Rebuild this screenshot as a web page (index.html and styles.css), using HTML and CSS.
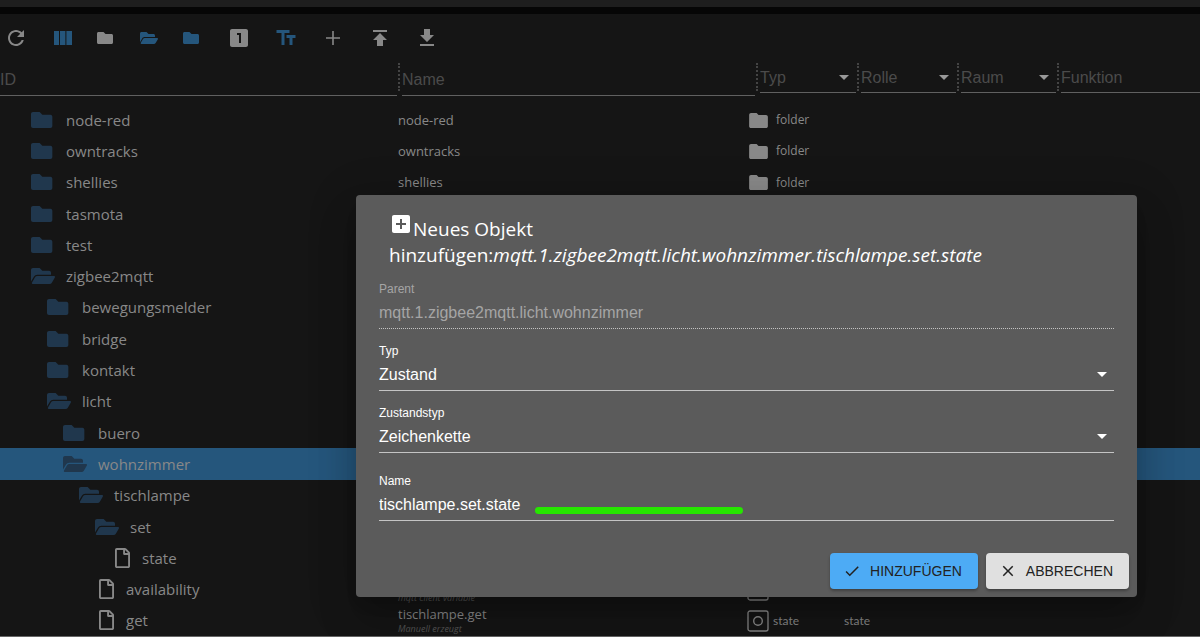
FILE: index.html
```
<!DOCTYPE html>
<html lang="de">
<head>
    <meta charset="UTF-8">
    <meta name="viewport" content="width=device-width, initial-scale=1.0">
    <title>Objekte</title>
    <link rel="stylesheet" href="styles.css">
</head>
<body>
    <svg class="sprite" aria-hidden="true">
        <symbol id="folder" viewBox="0 0 576 512"><path d="M464 128H272l-64-64H48C21.49 64 0 85.49 0 112v288c0 26.51 21.49 48 48 48h416c26.51 0 48-21.49 48-48V176c0-26.51-21.49-48-48-48z"/></symbol>
        <symbol id="folder-open" viewBox="0 0 576 512"><path d="M572.694 292.093L500.27 416.248A63.997 63.997 0 0 1 444.989 448H45.025c-18.523 0-30.064-20.093-20.731-36.093l72.424-124.155A64 64 0 0 1 152 256h399.964c18.523 0 30.064 20.093 20.73 36.093zM152 224h328v-48c0-26.51-21.49-48-48-48H272l-64-64H48C21.49 64 0 85.49 0 112v278.046l69.077-118.418C86.214 242.25 117.989 224 152 224z"/></symbol>
        <symbol id="file" viewBox="0 0 384 512"><path d="M369.9 97.9L286 14C277 5 264.8-.1 252.1-.1H48C21.5 0 0 21.5 0 48v416c0 26.5 21.5 48 48 48h288c26.5 0 48-21.5 48-48V131.9c0-12.7-5.1-25-14.1-34zM332.1 128H256V51.9l76.1 76.1zM48 464V48h160v104c0 13.3 10.7 24 24 24h104v288H48z"/></symbol>
        <symbol id="type-folder" viewBox="2 4 20 16"><path d="M10 4H4c-1.1 0-1.99.9-1.99 2L2 18c0 1.1.9 2 2 2h16c1.1 0 2-.9 2-2V8c0-1.1-.9-2-2-2h-8l-2-2z"/></symbol>
        <symbol id="type-state" viewBox="0 0 22 22"><rect x="1" y="1" width="20" height="20" rx="2" fill="none" stroke="currentColor" stroke-width="1.3"/><circle cx="11" cy="11" r="4.3" fill="none" stroke="currentColor" stroke-width="1.4"/></symbol>
    </svg>

    <div class="app-bar"></div>
    <main>
        <div class="toolbar">
            <button title="Aktualisieren"><svg viewBox="0 0 24 24"><path d="M17.65 6.35C16.2 4.9 14.21 4 12 4c-4.42 0-7.99 3.58-7.99 8s3.57 8 7.99 8c3.73 0 6.84-2.55 7.73-6h-2.08c-.82 2.33-3.04 4-5.65 4-3.31 0-6-2.69-6-6s2.69-6 6-6c1.66 0 3.14.69 4.22 1.78L13 11h7V4l-2.35 2.35z"/></svg></button>
            <button class="active" title="Spalten"><svg viewBox="0 0 24 24"><path d="M3 5h5v14H3zM9 5h5.400v14H9zM15.400 5H21v14h-5.600z"/></svg></button>
            <button class="narrow" title="Alle zuklappen"><svg><use href="#folder"/></svg></button>
            <button class="narrow active" title="Alle aufklappen"><svg><use href="#folder-open"/></svg></button>
            <button class="narrow active" title="Eine Ebene zuklappen"><svg><use href="#folder"/></svg></button>
            <button title="Eine Ebene aufklappen"><svg viewBox="0 0 24 24"><path d="M19 3H5c-1.100 0-2 .9-2 2v14c0 1.100.9 2 2 2h14c1.100 0 2-.9 2-2V5c0-1.100-.9-2-2-2zm-5 14h-2V9h-2V7h4v10z"/></svg></button>
            <button class="active" title="Originale Namen"><svg viewBox="0 0 24 24"><path d="M2.500 4v3h5v12h3V7h5V4h-13zm19 5h-9v3h3v7h3v-7h3V9z"/></svg></button>
            <button title="Objekt hinzufügen"><svg viewBox="0 0 24 24"><path d="M19 12.800h-6.200V19h-1.600v-6.200H5v-1.600h6.200V5h1.600v6.200H19v1.600z"/></svg></button>
            <button title="Hochladen"><svg viewBox="0 0 24 24"><path d="M5 4v2h14V4H5zm0 10h4v6h6v-6h4l-7-7-7 7z"/></svg></button>
            <button title="Speichern"><svg viewBox="0 0 24 24"><path d="M19 9h-4V3H9v6H5l7 7 7-7zM5 18v2h14v-2H5z"/></svg></button>
        </div>

        <table>
            <thead>
                <tr>
                    <th><input type="text" placeholder="ID" aria-label="ID"></th>
                    <th><input type="text" placeholder="Name" aria-label="Name"></th>
                    <th><div class="select"><select aria-label="Typ"><option>Typ</option></select></div></th>
                    <th><div class="select"><select aria-label="Rolle"><option>Rolle</option></select></div></th>
                    <th><div class="select"><select aria-label="Raum"><option>Raum</option></select></div></th>
                    <th><div class="select no-arrow"><select aria-label="Funktion"><option>Funktion</option></select></div></th>
                </tr>
            </thead>
            <tbody>
                <tr>
                    <td class="id level-1"><svg><use href="#folder"/></svg>node-red</td>
                    <td class="name">node-red</td>
                    <td class="type"><svg><use href="#type-folder"/></svg>folder</td>
                </tr>
                <tr>
                    <td class="id level-1"><svg><use href="#folder"/></svg>owntracks</td>
                    <td class="name">owntracks</td>
                    <td class="type"><svg><use href="#type-folder"/></svg>folder</td>
                </tr>
                <tr>
                    <td class="id level-1"><svg><use href="#folder"/></svg>shellies</td>
                    <td class="name">shellies</td>
                    <td class="type"><svg><use href="#type-folder"/></svg>folder</td>
                </tr>
                <tr><td class="id level-1"><svg><use href="#folder"/></svg>tasmota</td></tr>
                <tr><td class="id level-1"><svg><use href="#folder"/></svg>test</td></tr>
                <tr><td class="id level-1"><svg><use href="#folder-open"/></svg>zigbee2mqtt</td></tr>
                <tr><td class="id level-2"><svg><use href="#folder"/></svg>bewegungsmelder</td></tr>
                <tr><td class="id level-2"><svg><use href="#folder"/></svg>bridge</td></tr>
                <tr><td class="id level-2"><svg><use href="#folder"/></svg>kontakt</td></tr>
                <tr><td class="id level-2"><svg><use href="#folder-open"/></svg>licht</td></tr>
                <tr><td class="id level-3"><svg><use href="#folder"/></svg>buero</td></tr>
                <tr class="selected"><td class="id level-3"><svg><use href="#folder-open"/></svg>wohnzimmer</td></tr>
                <tr><td class="id level-4"><svg><use href="#folder-open"/></svg>tischlampe</td></tr>
                <tr><td class="id level-5"><svg><use href="#folder-open"/></svg>set</td></tr>
                <tr><td class="id level-6 file"><svg><use href="#file"/></svg>state</td></tr>
                <tr>
                    <td class="id level-5 file"><svg><use href="#file"/></svg>availability</td>
                    <td class="name unnamed"><i>mqtt client variable</i></td>
                    <td class="type state"><svg><use href="#type-state"/></svg></td>
                </tr>
                <tr>
                    <td class="id level-5 file"><svg><use href="#file"/></svg>get</td>
                    <td class="name">tischlampe.get<i>Manuell erzeugt</i></td>
                    <td class="type state"><svg><use href="#type-state"/></svg>state</td>
                    <td class="role">state</td>
                </tr>
            </tbody>
        </table>
    </main>

    <form class="dialog" role="dialog" aria-labelledby="dialogTitle">
        <h2 id="dialogTitle"><svg viewBox="0 0 24 24"><path d="M19 3H5c-1.110 0-2 .9-2 2v14c0 1.100.89 2 2 2h14c1.100 0 2-.9 2-2V5c0-1.100-.9-2-2-2zm-2 10h-4v4h-2v-4H7v-2h4V7h2v4h4v2z"/></svg>Neues Objekt<br>hinzufügen:<i>mqtt.1.zigbee2mqtt.licht.wohnzimmer.tischlampe.set.state</i></h2>
        <div class="field disabled">
            <label for="parent">Parent</label>
            <input type="text" id="parent" value="mqtt.1.zigbee2mqtt.licht.wohnzimmer" disabled>
        </div>
        <div class="field">
            <label for="type">Typ</label>
            <div class="select"><select id="type"><option>Zustand</option></select></div>
        </div>
        <div class="field">
            <label for="stateType">Zustandstyp</label>
            <div class="select"><select id="stateType"><option>Zeichenkette</option></select></div>
        </div>
        <div class="field last">
            <label for="name">Name</label>
            <input type="text" id="name" value="tischlampe.set.state">
            <span class="marker"></span>
        </div>
        <div class="buttons">
            <button type="submit" class="add"><svg viewBox="0 0 24 24"><path d="M9 16.170L4.830 12l-1.420 1.410L9 19 21 7l-1.410-1.410z"/></svg>HINZUFÜGEN</button>
            <button type="button" class="cancel"><svg viewBox="0 0 24 24"><path d="M19 6.410L17.590 5 12 10.590 6.410 5 5 6.410 10.590 12 5 17.590 6.410 19 12 13.410 17.590 19 19 17.590 13.410 12z"/></svg>ABBRECHEN</button>
        </div>
    </form>
</body>
</html>
```

FILE: styles.css
```
* {
    margin: 0;
    padding: 0;
    box-sizing: border-box;
}
body {
    display: flex;
    flex-direction: column;
    min-height: 100vh;
    background-color: #151515;
    color: #888;
    font-family: "Segoe UI", "Open Sans", "Noto Sans", sans-serif;
    font-size: 15px;
    border-bottom: 1px solid #666;
}
svg {
    fill: currentColor;
    flex: none;
}
input, select, button {
    font-family: Arial, "Liberation Sans", sans-serif;
    border: none;
    background: none;
    color: inherit;
}
.sprite {
    display: none;
}
.app-bar {
    height: 14px;
    background: #1e1e1e;
    border-bottom: 7px solid #060606;
}
main {
    flex: 1;
    display: flex;
    flex-direction: column;
}

/* toolbar */
.toolbar {
    display: flex;
    height: 48px;
    margin-left: -8px;
}
.toolbar button {
    width: 47px;
    display: flex;
    align-items: center;
    justify-content: center;
}
.toolbar svg {
    width: 24px;
    height: 24px;
}
.toolbar .narrow {
    width: 43px;
    padding-right: 4px;
}
.toolbar .narrow svg {
    width: 18px;
    height: 16px;
}
.toolbar .active {
    color: #25567c;
}

/* object table */
table, tbody {
    flex: 1;
    display: flex;
    flex-direction: column;
}
thead tr {
    display: grid;
    grid-template-columns: 398fr 358fr 101px 100px 100px 143px;
    height: 42px;
    color: #4b4b4b;
}
th {
    font-weight: normal;
    padding-left: 4px;
    position: relative;
}
th:first-child {
    padding-left: 0;
}
th + th::before {
    content: "";
    position: absolute;
    left: 0;
    top: 1px;
    height: 28px;
    border-left: 2px dotted #444;
}
th input {
    display: block;
    width: calc(100% - 1px);
    height: 34px;
    padding-top: 2px;
    font-size: 16px;
    border-bottom: 1px solid #606060;
}
th .select {
    height: 31px;
    margin-right: 1px;
    border-bottom: 1px solid #606060;
}
th .select::after {
    border-top-color: #999;
}
th .no-arrow {
    margin-right: 0;
}
th .no-arrow::after {
    display: none;
}
::placeholder {
    color: #4b4b4b;
}
.select {
    position: relative;
}
.select::after {
    content: "";
    position: absolute;
    right: 7px;
    top: 13px;
    border: 5px solid transparent;
    border-top-color: white;
    border-bottom: none;
    pointer-events: none;
}
select {
    appearance: none;
    width: 100%;
    height: 30px;
    font-size: 16px;
}
tbody tr {
    flex: 1;
    display: grid;
    grid-template-columns: 398fr 351fr 95px 356px;
    align-items: center;
    min-height: 31px;
}
tbody .selected {
    background: #25567c;
}
.id {
    display: flex;
    align-items: center;
    gap: 11px;
    line-height: 20px;
}
.id svg {
    width: 24px;
    height: 22px;
    color: #20374d;
}
.id.file {
    gap: 12px;
}
.file svg {
    width: 15px;
    height: 20px;
    margin-left: 4px;
    color: #888;
}
.level-1 { padding-left: 31px; }
.level-2 { padding-left: 47px; }
.level-3 { padding-left: 63px; }
.level-4 { padding-left: 79px; }
.level-5 { padding-left: 95px; }
.level-6 { padding-left: 111px; }
.name {
    font-size: 13px;
    line-height: 18px;
}
.name i {
    display: block;
    font-size: 9px;
    line-height: 12px;
    color: #555;
}
.unnamed {
    padding-top: 18px;
}
.type {
    display: flex;
    align-items: center;
    gap: 8px;
    font-size: 12px;
    line-height: 20px;
    padding-top: 1px;
}
.type svg {
    width: 19px;
    height: 15px;
}
.type.state {
    gap: 4px;
    margin-left: -2px;
}
.state svg {
    width: 22px;
    height: 22px;
}
.state, .role {
    font-family: Lato, sans-serif;
    font-size: 12px;
}

/* dialog */
.dialog {
    position: absolute;
    top: 195px;
    left: 356px;
    right: 63px;
    padding: 21px 8px 8px 23px;
    background: #5b5b5b;
    color: white;
    border-radius: 4px;
    box-shadow: 0 11px 15px -7px rgba(0, 0, 0, 0.2), 0 24px 38px 3px rgba(0, 0, 0, 0.14), 0 9px 46px 8px rgba(0, 0, 0, 0.12);
}
.dialog h2 {
    padding: 0 0 13px 10px;
    font-size: 19px;
    line-height: 26px;
    font-weight: normal;
}
.dialog h2 svg {
    width: 24px;
    height: 24px;
    vertical-align: bottom;
    margin-bottom: 6px;
    margin-top: -4px;
}
.field {
    position: relative;
    margin: 0 15px 14px 0;
}
.field label {
    display: block;
    font-family: Arial, "Liberation Sans", sans-serif;
    font-size: 12px;
    line-height: 16px;
}
.field input, .field .select {
    display: block;
    width: 100%;
    height: 32px;
    font-size: 16px;
    border-bottom: 1px solid #c4c4c4;
}
.field.disabled {
    color: #a5a5a5;
}
.field.disabled input {
    border-bottom-style: dotted;
}
.field.last {
    margin-top: 20px;
    margin-bottom: 32px;
}
.marker {
    position: absolute;
    left: 156px;
    bottom: 7px;
    width: 208px;
    height: 7px;
    border-radius: 4px;
    background: #26e600;
}
.buttons {
    display: flex;
    justify-content: flex-end;
    gap: 8px;
}
.buttons button {
    display: flex;
    align-items: center;
    gap: 9px;
    height: 36px;
    padding: 0 16px 0 13px;
    font-size: 14px;
    color: #222;
    border-radius: 4px;
    box-shadow: 0 2px 3px rgba(0, 0, 0, 0.3);
}
.buttons svg {
    width: 18px;
    height: 18px;
}
.buttons .add {
    background: #4dabf5;
}
.buttons .cancel {
    background: #e0e0e0;
}
```
